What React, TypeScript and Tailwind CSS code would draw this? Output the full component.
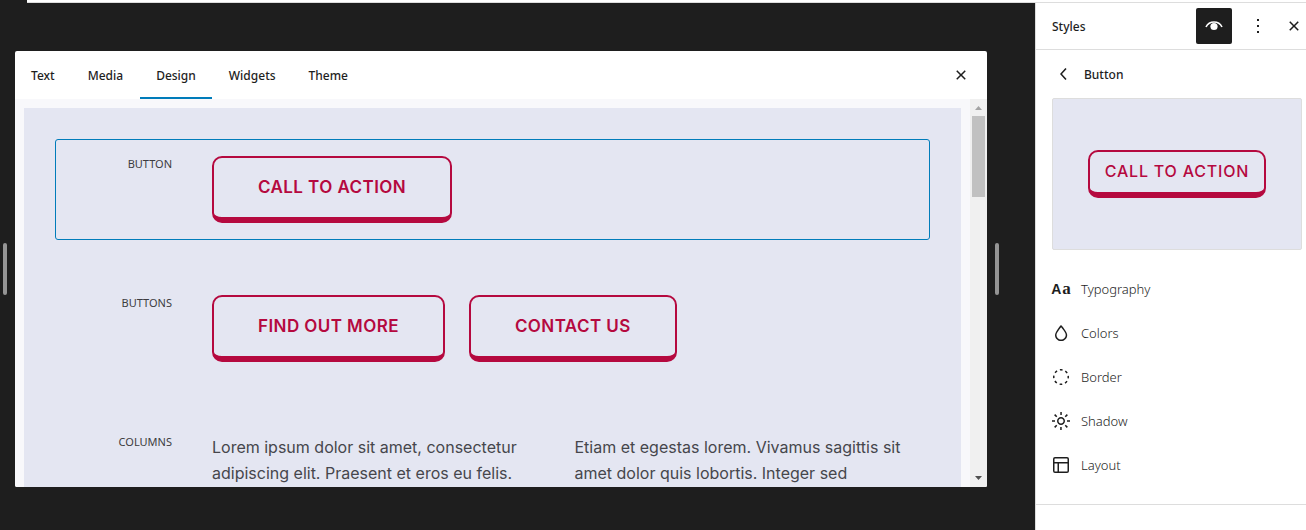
import type { ReactNode } from 'react';

const CLOSE =
  'M12 13.06l3.712 3.713 1.061-1.06L13.061 12l3.712-3.712-1.06-1.06L12 10.938 8.288 7.227l-1.061 1.06L10.939 12l-3.712 3.712 1.06 1.061L12 13.061z';
const MORE = 'M13 19h-2v-2h2v2zm0-6h-2v-2h2v2zm0-6h-2V5h2v2z';
const BACK = 'M14.6 7l-1.2-1L8 12l5.4 6 1.2-1-4.6-5z';
const DROP =
  'M17.2 10.9c-.5-1-1.2-2.1-2.1-3.2-.6-.9-1.3-1.7-2.1-2.6L12 4l-1 1.1c-.6.9-1.3 1.7-2 2.6-.8 1.2-1.5 2.3-2 3.2-.6 1.2-1 2.2-1 3 0 3.4 2.7 6.1 6.1 6.1s6.1-2.7 6.1-6.1c0-.8-.3-1.8-1-3zm-5.1 7.6c-2.5 0-4.6-2.1-4.6-4.6 0-.3.1-1 .8-2.3.5-.9 1.1-1.9 2-3.1.7-.9 1.3-1.7 1.8-2.3.7.8 1.3 1.6 1.8 2.3.8 1.1 1.5 2.2 2 3.1.7 1.3.8 2 .8 2.3 0 2.5-2.1 4.6-4.6 4.6z';
const SUN =
  'M12 8c-2.2 0-4 1.8-4 4s1.8 4 4 4 4-1.8 4-4-1.8-4-4-4zm0 6.5c-1.4 0-2.5-1.1-2.5-2.5s1.1-2.5 2.5-2.5 2.5 1.1 2.5 2.5-1.1 2.5-2.5 2.5zM12.8 3h-1.5v3h1.5V3zm-1.6 18h1.5v-3h-1.5v3zm6.8-9.8v1.5h3v-1.5h-3zm-12 0H3v1.5h3v-1.5zm9.7 5.6 2.1 2.1 1.1-1.1-2.1-2.1-1.1 1.1zM8.3 7.2 6.2 5.1 5.1 6.2l2.1 2.1 1.1-1.1zM5.1 17.8l1.1 1.1 2.1-2.1-1.1-1.1-2.1 2.1zM18.9 6.2l-1.1-1.1-2.1 2.1 1.1 1.1 2.1-2.1z';
const LAYOUT =
  'M18 5.5H6a.5.5 0 00-.5.5v3h13V6a.5.5 0 00-.5-.5zm.5 5H10v8h8a.5.5 0 00.5-.5v-7.5zm-10 0h-3V18a.5.5 0 00.5.5h2.5v-8zM6 4h12a2 2 0 012 2v12a2 2 0 01-2 2H6a2 2 0 01-2-2V6a2 2 0 012-2z';

function Icon({ d, children }: { d?: string; children?: ReactNode }) {
  return (
    <svg viewBox="0 0 24 24" className="size-6 shrink-0 fill-current" aria-hidden="true">
      {d ? <path fillRule="evenodd" d={d} /> : children}
    </svg>
  );
}

const tabs = ['Text', 'Media', 'Design', 'Widgets', 'Theme'];

const settings: { name: string; icon: ReactNode }[] = [
  {
    name: 'Typography',
    icon: (
      <span className="flex w-6 shrink-0 items-baseline justify-center gap-px font-bold leading-6" aria-hidden="true">
        <span className="font-['Liberation_Sans',sans-serif] text-[14px]">A</span>
        <span className="font-['Liberation_Serif',serif] text-[17px]">a</span>
      </span>
    ),
  },
  { name: 'Colors', icon: <Icon d={DROP} /> },
  {
    name: 'Border',
    icon: (
      <Icon>
        <circle
          cx="12"
          cy="12"
          r="7.25"
          fill="none"
          stroke="currentColor"
          strokeWidth="1.5"
          strokeDasharray="2.7 2.994"
          strokeDashoffset="1.35"
        />
      </Icon>
    ),
  },
  { name: 'Shadow', icon: <Icon d={SUN} /> },
  { name: 'Layout', icon: <Icon d={LAYOUT} /> },
];

function CtaButton({ children }: { children: ReactNode }) {
  return (
    <button
      type="button"
      className="rounded-[10px] border-2 border-b-6 border-[#b5093f] px-11 py-[18px] font-['Inter',sans-serif] text-[17px] leading-[23px] font-semibold tracking-wide whitespace-nowrap text-[#b5093f]"
    >
      {children}
    </button>
  );
}

function Example({ label, selected, children }: { label: string; selected?: boolean; children: ReactNode }) {
  return (
    <section
      className={`flex gap-10 rounded-[3px] border p-4 ${selected ? 'border-[#007cba]' : 'border-transparent'}`}
    >
      <h2 className="w-[100px] shrink-0 text-right text-[11px] leading-4 text-[#3c3c40]">{label}</h2>
      <div className="min-w-0 flex-1">{children}</div>
    </section>
  );
}

function ResizeHandle({ side }: { side: string }) {
  return (
    <button type="button" aria-label={`Resize ${side}`} className="h-[52px] w-1 shrink-0 rounded-xs bg-[#949494]" />
  );
}

function Scrollbar() {
  return (
    <div className="flex w-[17px] shrink-0 flex-col items-center justify-between bg-[#f0f0f0]" aria-hidden="true">
      <div className="flex flex-col items-center">
        <svg viewBox="0 0 17 17" className="size-[17px] fill-[#a3a3a3]">
          <path d="M5 11h7L8.500 7z" />
        </svg>
        <div className="h-[81px] w-[13px] bg-[#c1c1c1]" />
      </div>
      <svg viewBox="0 0 17 17" className="size-[17px] fill-[#505050]">
        <path d="M5 6h7L8.500 10z" />
      </svg>
    </div>
  );
}

function StyleBook() {
  return (
    <div className="flex min-w-0 flex-1 flex-col self-stretch overflow-hidden rounded-xs bg-white">
      <header className="flex h-12 shrink-0 items-stretch justify-between pr-2">
        <div role="tablist" className="flex gap-px">
          {tabs.map((tab) => (
            <button
              key={tab}
              type="button"
              role="tab"
              aria-selected={tab === 'Design'}
              className={`border-b-2 px-4 pt-1 text-xs font-medium ${
                tab === 'Design' ? 'border-[#007cba]' : 'border-transparent'
              }`}
            >
              {tab}
            </button>
          ))}
        </div>
        <button type="button" aria-label="Close style book" className="flex w-9 items-center justify-center">
          <Icon d={CLOSE} />
        </button>
      </header>
      <div className="flex min-h-0 flex-1 bg-[#f8f8fb]">
        <div className="h-0 min-h-full flex-1 overflow-hidden px-[9px] pt-[9px]">
          <div className="flex flex-col gap-[38px] bg-[#e4e6f2] p-[31px]">
            <Example label="BUTTON" selected>
              <CtaButton>CALL TO ACTION</CtaButton>
            </Example>
            <Example label="BUTTONS">
              <div className="flex gap-6">
                <CtaButton>FIND OUT MORE</CtaButton>
                <CtaButton>CONTACT US</CtaButton>
              </div>
            </Example>
            <Example label="COLUMNS">
              <div className="grid grid-cols-2 gap-6 font-['Inter',sans-serif] text-base leading-[26px] text-[#46464c]">
                <p>
                  Lorem ipsum dolor sit amet, consectetur
                  <br />
                  adipiscing elit. Praesent et eros eu felis.
                </p>
                <p>
                  Etiam et egestas lorem. Vivamus sagittis sit
                  <br />
                  amet dolor quis lobortis. Integer sed
                </p>
              </div>
            </Example>
          </div>
        </div>
        <Scrollbar />
      </div>
    </div>
  );
}

function Sidebar() {
  return (
    <aside className="w-[271px] shrink-0 border-l border-[#ddd] bg-white text-[13px]">
      <header className="flex h-[47px] items-center border-b border-[#ddd] pl-4">
        <h1 className="flex-1 pt-0.5 text-xs font-medium">Styles</h1>
        <button
          type="button"
          aria-label="Style Book"
          aria-pressed="true"
          className="mr-2 flex size-9 items-center justify-center rounded-xs bg-[#1e1e1e] text-white"
        >
          <Icon>
            <path d="M4 13C4.700 11.600 7.200 8 12 8s7.300 3.600 8 5" fill="none" stroke="currentColor" strokeWidth="1.6" />
            <circle cx="12" cy="12.500" r="3.600" />
          </Icon>
        </button>
        <button type="button" aria-label="More" className="flex size-9 items-center justify-center">
          <Icon d={MORE} />
        </button>
        <button type="button" aria-label="Close styles" className="flex h-9 w-[30px] items-center justify-end">
          <Icon d={CLOSE} />
        </button>
      </header>
      <div className="flex h-12 items-center gap-2 pl-4">
        <button type="button" aria-label="Back" className="flex size-6 items-center justify-center">
          <Icon d={BACK} />
        </button>
        <h2 className="pt-0.5 text-xs font-medium">Button</h2>
      </div>
      <div className="mr-1 ml-4 flex h-[152px] items-center justify-center rounded-xs border border-[#ddd] bg-[#e4e6f2]">
        <button
          type="button"
          className="rounded-[10px] border-2 border-b-6 border-[#b5093f] px-[15px] pt-[7px] pb-[9px] font-['Inter',sans-serif] text-base leading-6 font-medium tracking-wider whitespace-nowrap text-[#b5093f]"
        >
          CALL TO ACTION
        </button>
      </div>
      <ul className="border-b border-[#ddd] py-[17px] pl-[13px] font-light">
        {settings.map(({ name, icon }) => (
          <li key={name}>
            <button type="button" className="flex h-11 w-full items-center gap-2 text-left">
              {icon}
              <span className="pt-0.5">{name}</span>
            </button>
          </li>
        ))}
      </ul>
    </aside>
  );
}

export default function App() {
  return (
    <div className="flex min-h-screen flex-col bg-[#1e1e1e] font-['Noto_Sans',sans-serif] text-[#1e1e1e]">
      <div className="ml-[27px] h-[3px] border-b border-[#ddd] bg-white" />
      <div className="flex flex-1">
        <main className="flex min-w-0 flex-1 items-center gap-2 pt-12 pr-9 pb-[43px] pl-[3px]">
          <ResizeHandle side="left" />
          <StyleBook />
          <ResizeHandle side="right" />
        </main>
        <Sidebar />
      </div>
    </div>
  );
}
